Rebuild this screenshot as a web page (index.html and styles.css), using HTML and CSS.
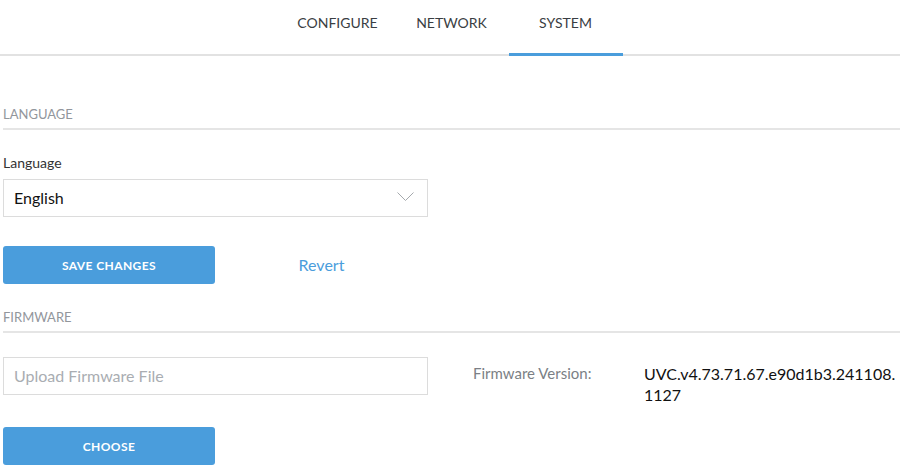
FILE: index.html
```html
<!DOCTYPE html>
<html lang="en">
<head>
  <meta charset="UTF-8">
  <meta name="viewport" content="width=device-width, initial-scale=1.0">
  <title>System</title>
  <link rel="stylesheet" href="styles.css">
</head>
<body>
  <nav class="tabs">
    <a class="tab" href="#">CONFIGURE</a>
    <a class="tab" href="#">NETWORK</a>
    <a class="tab active" href="#">SYSTEM</a>
  </nav>

  <main class="page">
    <h2 class="section-title">LANGUAGE</h2>

    <label class="field-label">Language</label>
    <div class="select">
      <span>English</span>
      <svg width="17" height="10" viewBox="0 0 17 10"><path d="M0.5 0.5 L8.5 8.5 L16.5 0.5" fill="none" stroke="#a5a9ad" stroke-width="1"/></svg>
    </div>

    <div class="actions">
      <button class="btn">SAVE CHANGES</button>
      <a class="link" href="#">Revert</a>
    </div>

    <h2 class="section-title firmware-title">FIRMWARE</h2>

    <div class="fw-row">
      <input class="text-input" type="text" placeholder="Upload Firmware File">
      <div class="fw-info">
        <span class="fw-label">Firmware Version:</span>
        <span class="fw-value">UVC.v4.73.71.67.e90d1b3.241108.<wbr>1127</span>
      </div>
    </div>

    <div class="actions choose-row">
      <button class="btn">CHOOSE</button>
    </div>
  </main>
</body>
</html>
```

FILE: styles.css
```css
body {
  margin: 0;
  font-family: Lato, "Open Sans", sans-serif;
  color: #222;
  background: #fff;
}

/* top tabs */
.tabs {
  display: flex;
  justify-content: center;
  height: 54px;
  padding-left: 3px;
  border-bottom: 2px solid #e2e2e2;
}

.tab {
  position: relative;
  width: 114px;
  padding-top: 14px;
  box-sizing: border-box;
  text-align: center;
  font-size: 14px;
  color: #3a3e43;
  text-decoration: none;
}

.tab.active::after {
  content: "";
  position: absolute;
  left: 0;
  right: 0;
  bottom: -2px;
  height: 3px;
  background: #4a9ddc;
}

.page {
  padding-left: 3px;
}

.section-title {
  margin: 50px 0 0;
  padding-bottom: 6px;
  border-bottom: 2px solid #e5e5e5;
  font-size: 13px;
  font-weight: normal;
  color: #92969c;
}

.firmware-title {
  margin-top: 25px;
}

.field-label {
  display: block;
  margin-top: 24px;
  font-size: 14px;
  color: #333;
}

.select {
  display: flex;
  align-items: center;
  justify-content: space-between;
  width: 425px;
  height: 38px;
  margin-top: 8px;
  padding: 0 13px 0 10px;
  box-sizing: border-box;
  border: 1px solid #dcdcdc;
  font-size: 16px;
  color: #111;
}

.select span {
  margin-top: -2px;
}

.select svg {
  margin-top: -2px;
}

.actions {
  display: grid;
  grid-template-columns: 212px 213px;
  align-items: center;
  margin-top: 29px;
}

.btn {
  height: 38px;
  border: none;
  border-radius: 3px;
  background: #4a9ddc;
  color: #fff;
  font-family: inherit;
  font-size: 12px;
  font-weight: bold;
  letter-spacing: 0.4px;
}

.link {
  margin-top: -2px;
  text-align: center;
  font-size: 16px;
  color: #4a9ddc;
  text-decoration: none;
}

.fw-row {
  display: grid;
  grid-template-columns: 425px 1fr;
  align-items: start;
  column-gap: 45px;
  margin-top: 24px;
}

.choose-row {
  margin-top: 22px;
}

.text-input {
  height: 38px;
  padding: 0 10px 2px;
  box-sizing: border-box;
  border: 1px solid #dcdcdc;
  font-family: inherit;
  font-size: 16px;
  outline: none;
}

.text-input::placeholder {
  color: #a9adb2;
}

.fw-info {
  display: grid;
  grid-template-columns: 171px 1fr;
  padding-top: 6px;
  line-height: 21px;
}

.fw-label {
  font-size: 15px;
  color: #7b7f85;
}

.fw-value {
  font-size: 16px;
  color: #111;
}
```
